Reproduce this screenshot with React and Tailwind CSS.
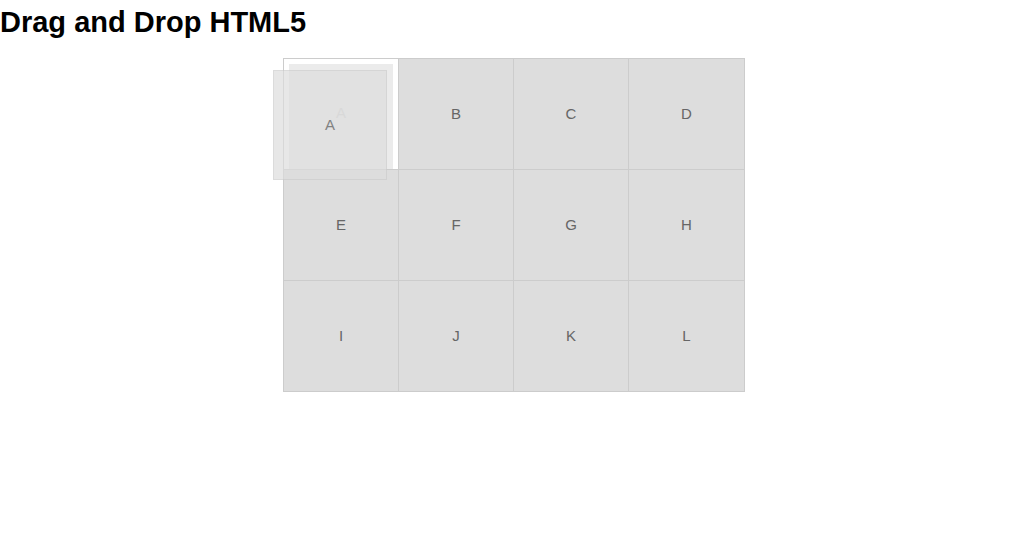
import React from "react";

const letters = ["A","B","C","D","E","F","G","H","I","J","K","L"];

export default function App() {
  return (
    <div className="w-[1024px] h-[553px] bg-white" style={{ fontFamily: '"Liberation Sans", Arial, sans-serif' }}>
      <h1 className="pt-[6px] text-[29px] leading-[33px] font-bold text-black m-0">Drag and Drop HTML5</h1>
      <div className="flex justify-center pl-[4px] mt-[19px]">
        <div className="grid grid-cols-[115px_115px_115px_116px] border-l border-t border-[#cccccc]">
          {letters.map((l, i) =>
            i === 0 ? (
              <div key={l} className="relative h-[111px] border-r border-b border-[#cccccc] bg-white flex items-center justify-center">
                <div className="absolute left-[5px] top-[5px] w-[104px] h-[105px] bg-[#ebebeb]" />
                <span className="relative text-[15px] text-[#cfcfcf] -translate-y-[1px]">A</span>
                <div className="absolute left-[-11px] top-[11px] w-[114px] h-[110px] bg-[#dddddd] border border-[#cccccc] opacity-70 flex items-center justify-center z-10">
                  <span className="text-[15px] text-[#555555]">A</span>
                </div>
              </div>
            ) : (
              <div key={l} className="h-[111px] border-r border-b border-[#cccccc] bg-[#dddddd] flex items-center justify-center">
                <span className="text-[15px] text-[#666666]">{l}</span>
              </div>
            )
          )}
        </div>
      </div>
    </div>
  );
}
